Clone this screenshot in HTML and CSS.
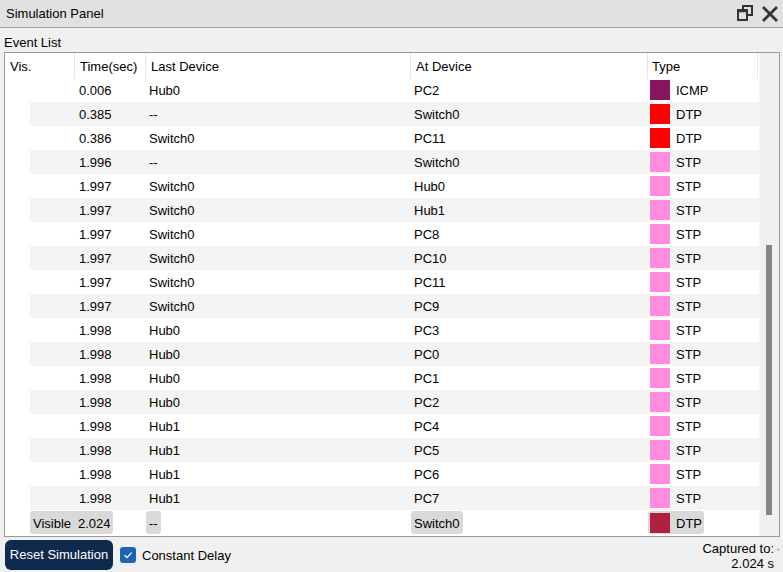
FILE: index.html
```html
<!DOCTYPE html>
<html>
<head>
<meta charset="utf-8">
<title>Simulation Panel</title>
<link rel="stylesheet" href="styles.css">
</head>
<body>
<div class="panel">
  <div class="titlebar">
    <span class="title">Simulation Panel</span>
    <div class="win-icons">
      <svg class="ic-restore" width="18" height="18" viewBox="0 0 18 18">
        <rect x="7" y="2" width="9" height="9" fill="none" stroke="#333" stroke-width="2"/>
        <rect x="2" y="6" width="9" height="10" fill="#e1e1e1" stroke="#333" stroke-width="2"/>
        <line x1="2" y1="7.5" x2="11" y2="7.5" stroke="#333" stroke-width="1.5"/>
      </svg>
      <svg class="ic-close" width="16" height="16" viewBox="0 0 16 16">
        <path d="M2 2 L14 14 M14 2 L2 14" stroke="#333" stroke-width="2.8" stroke-linecap="square" fill="none"/>
      </svg>
    </div>
  </div>

  <div class="section-label">Event List</div>

  <div class="box">
    <div class="table">
      <div class="thead">
        <div class="th c-vis">Vis.</div>
        <div class="th c-time">Time(sec)</div>
        <div class="th c-last">Last Device</div>
        <div class="th c-at">At Device</div>
        <div class="th c-type">Type</div>
      </div>
      <div class="tbody">
        <div class="row"><div class="td t-vis"></div><div class="td t-time">0.006</div><div class="td t-last">Hub0</div><div class="td t-at">PC2</div><div class="td t-type"><span class="sw sw-icmp"></span>ICMP</div></div>
        <div class="row"><div class="td t-vis"></div><div class="td t-time">0.385</div><div class="td t-last">--</div><div class="td t-at">Switch0</div><div class="td t-type"><span class="sw sw-dtp"></span>DTP</div></div>
        <div class="row"><div class="td t-vis"></div><div class="td t-time">0.386</div><div class="td t-last">Switch0</div><div class="td t-at">PC11</div><div class="td t-type"><span class="sw sw-dtp"></span>DTP</div></div>
        <div class="row"><div class="td t-vis"></div><div class="td t-time">1.996</div><div class="td t-last">--</div><div class="td t-at">Switch0</div><div class="td t-type"><span class="sw sw-stp"></span>STP</div></div>
        <div class="row"><div class="td t-vis"></div><div class="td t-time">1.997</div><div class="td t-last">Switch0</div><div class="td t-at">Hub0</div><div class="td t-type"><span class="sw sw-stp"></span>STP</div></div>
        <div class="row"><div class="td t-vis"></div><div class="td t-time">1.997</div><div class="td t-last">Switch0</div><div class="td t-at">Hub1</div><div class="td t-type"><span class="sw sw-stp"></span>STP</div></div>
        <div class="row"><div class="td t-vis"></div><div class="td t-time">1.997</div><div class="td t-last">Switch0</div><div class="td t-at">PC8</div><div class="td t-type"><span class="sw sw-stp"></span>STP</div></div>
        <div class="row"><div class="td t-vis"></div><div class="td t-time">1.997</div><div class="td t-last">Switch0</div><div class="td t-at">PC10</div><div class="td t-type"><span class="sw sw-stp"></span>STP</div></div>
        <div class="row"><div class="td t-vis"></div><div class="td t-time">1.997</div><div class="td t-last">Switch0</div><div class="td t-at">PC11</div><div class="td t-type"><span class="sw sw-stp"></span>STP</div></div>
        <div class="row"><div class="td t-vis"></div><div class="td t-time">1.997</div><div class="td t-last">Switch0</div><div class="td t-at">PC9</div><div class="td t-type"><span class="sw sw-stp"></span>STP</div></div>
        <div class="row"><div class="td t-vis"></div><div class="td t-time">1.998</div><div class="td t-last">Hub0</div><div class="td t-at">PC3</div><div class="td t-type"><span class="sw sw-stp"></span>STP</div></div>
        <div class="row"><div class="td t-vis"></div><div class="td t-time">1.998</div><div class="td t-last">Hub0</div><div class="td t-at">PC0</div><div class="td t-type"><span class="sw sw-stp"></span>STP</div></div>
        <div class="row"><div class="td t-vis"></div><div class="td t-time">1.998</div><div class="td t-last">Hub0</div><div class="td t-at">PC1</div><div class="td t-type"><span class="sw sw-stp"></span>STP</div></div>
        <div class="row"><div class="td t-vis"></div><div class="td t-time">1.998</div><div class="td t-last">Hub0</div><div class="td t-at">PC2</div><div class="td t-type"><span class="sw sw-stp"></span>STP</div></div>
        <div class="row"><div class="td t-vis"></div><div class="td t-time">1.998</div><div class="td t-last">Hub1</div><div class="td t-at">PC4</div><div class="td t-type"><span class="sw sw-stp"></span>STP</div></div>
        <div class="row"><div class="td t-vis"></div><div class="td t-time">1.998</div><div class="td t-last">Hub1</div><div class="td t-at">PC5</div><div class="td t-type"><span class="sw sw-stp"></span>STP</div></div>
        <div class="row"><div class="td t-vis"></div><div class="td t-time">1.998</div><div class="td t-last">Hub1</div><div class="td t-at">PC6</div><div class="td t-type"><span class="sw sw-stp"></span>STP</div></div>
        <div class="row"><div class="td t-vis"></div><div class="td t-time">1.998</div><div class="td t-last">Hub1</div><div class="td t-at">PC7</div><div class="td t-type"><span class="sw sw-stp"></span>STP</div></div>
        <div class="row row-current">
          <div class="td t-vis tagcell"><span class="tag tag-vis">Visible</span></div>
          <div class="td t-time tagcell"><span class="tag tag-time">2.024</span></div>
          <div class="td t-last tagcell"><span class="tag">--</span></div>
          <div class="td t-at tagcell"><span class="tag">Switch0</span></div>
          <div class="td t-type tagcell"><span class="tag tag-type"><span class="sw sw-dtp2"></span>DTP</span></div>
        </div>
      </div>
    </div>
    <div class="scrollbar"><div class="thumb"></div></div>
  </div>

  <div class="footer">
    <button class="btn-reset">Reset Simulation</button>
    <label class="check">
      <span class="checkbox">
        <svg width="16" height="16" viewBox="0 0 16 16"><path d="M4.5 8.2 L7 10.6 L11.6 5.6" fill="none" stroke="#fff" stroke-width="1.3"/></svg>
      </span>
      <span>Constant Delay</span>
    </label>
    <div class="captured">
      <div>Captured to:</div>
      <div>2.024 s</div>
      <span class="grip">*</span>
    </div>
  </div>
</div>
</body>
</html>
```

FILE: styles.css
```css
* { box-sizing: border-box; }

html, body {
  margin: 0;
  padding: 0;
}

body {
  width: 783px;
  height: 572px;
  overflow: hidden;
  background: #f0f0f0;
  font-family: "Liberation Sans", Arial, sans-serif;
  font-size: 13px;
  color: #000;
}

.panel {
  width: 783px;
  height: 572px;
  display: flex;
  flex-direction: column;
}

.titlebar {
  height: 28px;
  background: #e1e1e1;
  border-bottom: 1px solid #a6a6a6;
  display: flex;
  align-items: center;
  padding: 0 5px 0 6px;
}

.title {
  line-height: 15px;
  margin-top: -1px;
}

.win-icons {
  margin-left: auto;
  display: flex;
  align-items: center;
  gap: 8px;
  margin-top: -2px;
}

.ic-close { margin-top: 2px; }

.section-label {
  height: 24px;
  padding: 7px 0 0 4px;
  line-height: 15px;
}

.box {
  margin: 0 3px 0 4px;
  height: 485px;
  border: 1px solid #9a9a9a;
  display: flex;
  background: #fff;
}

.table {
  width: 754px;
  background: #fff;
  overflow: hidden;
}

.thead {
  height: 25px;
  display: grid;
  grid-template-columns: 70px 71px 265px 237px 110px;
}

.th {
  border-right: 1px solid #e6e6e6;
  padding: 1px 0 0 5px;
  line-height: 25px;
  white-space: nowrap;
}

.th.c-vis { padding-left: 5px; }
.th.c-type { padding-left: 4px; }

.tbody {
  padding-left: 25px;
}

.row {
  height: 24px;
  display: grid;
  grid-template-columns: 45px 71px 265px 237px 109px;
  align-items: center;
  white-space: nowrap;
}

.row:nth-child(even) {
  background: #f4f4f4;
}

.td {
  height: 24px;
  line-height: 22px;
  padding: 2px 0 0 3px;
  display: flex;
  align-items: center;
}

.td.t-time { padding-left: 4px; }
.td.t-type { padding-left: 2px; }
.td.t-type .sw { margin-top: -2px; }

.sw {
  display: inline-block;
  width: 20px;
  height: 20px;
  margin-right: 6px;
  flex: none;
}

.sw-icmp { background: #87155f; }
.sw-dtp { background: #ff0000; }
.sw-stp { background: #ff8cdc; }
.sw-dtp2 { background: #b1203d; }

.td.tagcell {
  padding: 0;
  align-items: flex-end;
}

.tag {
  display: inline-flex;
  align-items: center;
  height: 23px;
  line-height: 23px;
  padding: 1px 3px 0 3px;
  background: #d9d9d9;
  border-radius: 3px;
}

.tag-vis {
  width: 100%;
  border-radius: 3px 0 0 3px;
}

.tag-time {
  padding: 1px 2px 0 3px;
  border-radius: 0 3px 3px 0;
}

.tag-type {
  padding: 1px 2px 0 2px;
}

.td.t-type .tag-type .sw { margin-top: -1px; }

.scrollbar {
  width: 20px;
  background: #f0f0f0;
  border-left: 1px solid #f7f7f7;
  padding: 192px 0 0 6px;
}

.thumb {
  width: 6px;
  height: 270px;
  background: #858585;
}

.footer {
  flex: 1;
  display: flex;
  align-items: flex-start;
  padding: 3px 0 0 5px;
  position: relative;
}

.btn-reset {
  height: 30px;
  width: 108px;
  padding: 0;
  border: none;
  border-radius: 6px;
  background: #0f2a4d;
  color: #fff;
  font-family: "Liberation Sans", Arial, sans-serif;
  font-size: 13px;
  line-height: 30px;
}

.check {
  display: flex;
  align-items: center;
  gap: 6px;
  margin-left: 7px;
  height: 30px;
}

.checkbox {
  width: 16px;
  height: 16px;
  border-radius: 3px;
  background: #1f63b6;
  display: block;
}

.checkbox svg { display: block; }

.captured {
  margin-left: auto;
  text-align: right;
  line-height: 15px;
  padding: 1px 9px 0 0;
}

.grip {
  position: absolute;
  right: 3px;
  top: 10px;
  font-size: 9px;
  color: #b0b0b0;
  line-height: 9px;
}
```
